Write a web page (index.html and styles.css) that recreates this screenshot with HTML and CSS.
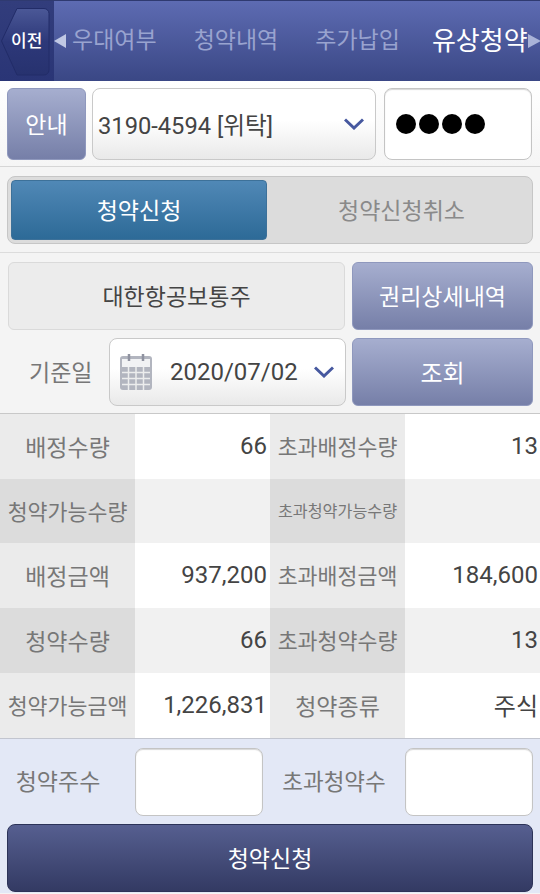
FILE: index.html
```html
<!DOCTYPE html>
<html lang="ko">
<head>
    <meta charset="UTF-8">
    <meta name="viewport" content="width=device-width, initial-scale=1.0">
    <title>유상청약</title>
    <link rel="stylesheet" href="styles.css">
</head>
<body>
    <header class="top-bar">
        <div class="back-cell">
            <svg class="back-shape" width="50" height="68" viewBox="0 0 50 68">
                <defs>
                    <linearGradient id="backFill" x1="0" y1="0" x2="0" y2="1">
                        <stop offset="0" stop-color="#4b5897"/>
                        <stop offset="0.5" stop-color="#2d3879"/>
                        <stop offset="1" stop-color="#27326f"/>
                    </linearGradient>
                </defs>
                <path d="M16 .5H43a5 5 0 0 1 5 5V62a5 5 0 0 1-5 5H16L.5 33Z" fill="url(#backFill)" stroke="#222c68"/>
            </svg>
            <span class="back-label">이전</span>
        </div>
        <span class="arrow arrow-left"></span>
        <nav class="tabs">
            <span class="tab">우대여부</span>
            <span class="tab">청약내역</span>
            <span class="tab">추가납입</span>
            <span class="tab tab-on">유상청약</span>
        </nav>
        <span class="arrow arrow-right"></span>
    </header>

    <section class="account-row">
        <button class="btn btn-blue btn-info">안내</button>
        <div class="field select-account">
            <span>3190-4594 [위탁]</span>
            <svg class="chevron" width="20" height="12" viewBox="0 0 20 12"><path d="M1 1.500 10 10 19 1.500" fill="none" stroke="#46589f" stroke-width="3"/></svg>
        </div>
        <div class="field field-white password">
            <i></i><i></i><i></i><i></i>
        </div>
    </section>

    <section class="segment-row">
        <div class="segment">
            <button class="seg-btn seg-on">청약신청</button>
            <button class="seg-btn seg-off">청약신청취소</button>
        </div>
    </section>

    <section class="query-area">
        <div class="stock-name">대한항공보통주</div>
        <button class="btn btn-blue">권리상세내역</button>
        <div class="date-wrap">
            <span class="date-label">기준일</span>
            <div class="field date-field">
                <svg class="calendar" width="34" height="38" viewBox="0 0 34 38">
                    <rect x="1" y="3" width="32" height="34" rx="3" fill="#b2b5bf"/>
                    <rect x="3" y="6" width="28" height="8" fill="#f1f2f4"/>
                    <path d="M3 19.500H31M3 25.500H31M3 31.500H31M9.500 14V37M17 14V37M24.500 14V37" stroke="#eceded" stroke-width="1.500"/>
                    <path d="M10 1V8M24 1V8" stroke="#8f92a0" stroke-width="2.500"/>
                </svg>
                <span class="date-text">2020/07/02</span>
                <svg class="chevron" width="20" height="12" viewBox="0 0 20 12"><path d="M1 1.500 10 10 19 1.500" fill="none" stroke="#46589f" stroke-width="3"/></svg>
            </div>
        </div>
        <button class="btn btn-blue btn-search">조회</button>
    </section>

    <section class="info-table">
        <div class="th">배정수량</div><div class="td">66</div>
        <div class="th fit">초과배정수량</div><div class="td">13</div>

        <div class="th alt fit">청약가능수량</div><div class="td alt">&nbsp;</div>
        <div class="th alt small">초과청약가능수량</div><div class="td alt">&nbsp;</div>

        <div class="th">배정금액</div><div class="td">937,200</div>
        <div class="th fit">초과배정금액</div><div class="td">184,600</div>

        <div class="th alt">청약수량</div><div class="td alt">66</div>
        <div class="th alt fit">초과청약수량</div><div class="td alt">13</div>

        <div class="th fit">청약가능금액</div><div class="td">1,226,831</div>
        <div class="th">청약종류</div><div class="td">주식</div>
    </section>

    <section class="order-area">
        <div class="order-inputs">
            <span class="order-label order-label-first">청약주수</span>
            <div class="field field-white order-box"></div>
            <span class="order-label order-label-second">초과청약수</span>
            <div class="field field-white order-box"></div>
        </div>
        <button class="btn-submit">청약신청</button>
    </section>
</body>
</html>
```

FILE: styles.css
```css
* {
    box-sizing: border-box;
}

html, body {
    margin: 0;
    padding: 0;
}

body {
    width: 540px;
    height: 894px;
    overflow: hidden;
    background: #f4f4f4;
    font-family: Roboto, "Noto Sans CJK KR", sans-serif;
    font-size: 23px;
    color: #444;
}

button {
    font-family: inherit;
    font-size: 23px;
    padding: 0 0 2px;
}

/* top bar */
.top-bar {
    height: 81px;
    display: flex;
    align-items: center;
    background: linear-gradient(#5d6bb2, #3a4785);
    border-top: 1px solid #2f3a70;
}

.back-cell {
    position: relative;
    flex: none;
    width: 54px;
    height: 80px;
    background: linear-gradient(#323d7c, #2a3576);
}

.back-shape {
    position: absolute;
    left: 1px;
    top: 7px;
}

.back-label {
    position: absolute;
    left: 11px;
    top: 26px;
    font-size: 17px;
    font-weight: 500;
    line-height: 28px;
    color: #fff;
}

.arrow {
    flex: none;
    width: 0;
    height: 0;
    margin-bottom: 1px;
    border-top: 7px solid transparent;
    border-bottom: 7px solid transparent;
}

.arrow-left {
    border-right: 12px solid #c0c8e4;
}

.arrow-right {
    border-left: 13px solid #a9b3d8;
}

.tabs {
    flex: 1;
    display: flex;
    gap: 37px;
    padding-left: 6px;
}

.tab {
    color: #99a3cf;
    font-size: 23px;
    line-height: 30px;
    white-space: nowrap;
}

.tab-on {
    margin-left: -5px;
    color: #fff;
    font-size: 26px;
}

/* account row */
.account-row {
    height: 86px;
    display: flex;
    align-items: center;
    gap: 6px;
    padding: 0 8px 0 7px;
    background: linear-gradient(#fff, #f5f5f5);
    border-bottom: 1px solid #d6d6d6;
}

.btn {
    border: 1px solid #8f98bd;
    border-radius: 6px;
    background: linear-gradient(#a6aecf, #767fa8);
    color: #fff;
}

.btn-info {
    flex: none;
    width: 79px;
    height: 72px;
}

.btn-search {
    font-size: 24px;
}

.field {
    display: flex;
    align-items: center;
    border: 1px solid #c9c9c9;
    border-radius: 8px;
    background: linear-gradient(#fff 45%, #e9e9e9);
}

.field-white {
    background: #fff;
    border-color: #c4c4c4;
    box-shadow: inset 0 1px 1px #d8d8d8;
}

.select-account {
    flex: none;
    width: 284px;
    height: 72px;
    justify-content: space-between;
    padding: 0 11px 0 5px;
    font-size: 23.700px;
}

.password {
    flex: none;
    width: 148px;
    height: 72px;
    margin-left: 2px;
    gap: 3px;
    padding-left: 11px;
}

.password i {
    width: 20px;
    height: 20px;
    border-radius: 50%;
    background: #000;
}

/* segment */
.segment-row {
    height: 86px;
    padding: 9px 7px 0;
    border-bottom: 1px solid #dcdcdc;
}

.segment {
    width: 526px;
    height: 68px;
    display: flex;
    padding: 3px;
    border: 1px solid #c6c6c6;
    border-radius: 8px;
    background: #dcdcdc;
}

.seg-btn {
    border: 0;
    background: none;
    color: #8a8a8a;
    flex: 1;
}

.seg-off {
    padding-left: 7px;
}

.seg-on {
    flex: none;
    width: 256px;
    border: 1px solid #3d7199;
    border-radius: 4px;
    color: #fff;
    background: linear-gradient(#5088b6, #2d6a97);
}

/* query */
.query-area {
    height: 160px;
    display: grid;
    grid-template-columns: 338px 181px;
    grid-template-rows: 68px 68px;
    gap: 8px 6px;
    padding: 9px 7px 0 8px;
    background: #f4f4f4;
}

.stock-name {
    display: flex;
    align-items: center;
    justify-content: center;
    margin-right: 1px;
    padding-bottom: 2px;
    border: 1px solid #dadada;
    border-radius: 6px;
    background: #ececec;
}

.date-wrap {
    display: flex;
    align-items: center;
}

.date-label {
    flex: none;
    width: 101px;
    padding: 0 0 2px 21px;
    color: #777;
}

.date-field {
    width: 237px;
    height: 68px;
    padding: 0 11px 0 9px;
}

.date-text {
    flex: 1;
    padding-left: 17px;
    font-size: 24px;
}

/* table */
.info-table {
    display: grid;
    grid-template-columns: 135px 135px 135px 135px;
    grid-template-rows: 65px 64px 65px 65px 65px;
    border-top: 1px solid #c8c8c8;
}

.th, .td {
    display: flex;
    align-items: center;
    padding-bottom: 2px;
}

.th {
    justify-content: center;
    background: #ebebeb;
    color: #777;
    white-space: nowrap;
}

.th.alt {
    background: #dcdcdc;
}

.th.fit {
    font-size: 21.700px;
}

.th.small {
    font-size: 16.200px;
}

.td {
    justify-content: flex-end;
    padding-right: 3px;
    background: #fff;
    font-size: 24px;
}

.td:nth-child(4n) {
    padding-right: 2px;
}

.td.alt {
    background: #f1f1f1;
}

/* order */
.order-area {
    height: 155px;
    padding: 9px 7px 0;
    background: #e3e8f6;
    border-top: 1px solid #c2c5cf;
}

.order-inputs {
    display: grid;
    grid-template-columns: 128px 128px 142px 128px;
    grid-template-rows: 68px;
    align-items: center;
}

.order-label {
    padding-bottom: 4px;
    color: #777;
    text-align: center;
}

.order-label-first {
    padding-right: 26px;
}

.order-label-second {
    font-size: 22.500px;
}

.order-box {
    height: 68px;
}

.btn-submit {
    display: block;
    width: 526px;
    height: 68px;
    margin-top: 8px;
    border: 1px solid #2c3358;
    border-radius: 8px;
    background: linear-gradient(#565f90, #333a63);
    color: #fff;
}
```
